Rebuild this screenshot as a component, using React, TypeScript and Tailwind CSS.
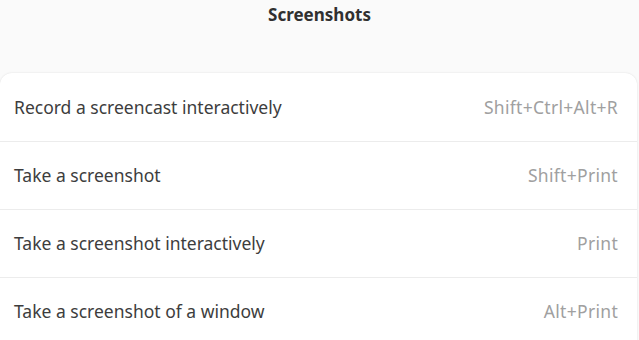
import React from 'react';

const shortcuts = [
  { label: 'Record a screencast interactively', keys: 'Shift+Ctrl+Alt+R' },
  { label: 'Take a screenshot', keys: 'Shift+Print' },
  { label: 'Take a screenshot interactively', keys: 'Print' },
  { label: 'Take a screenshot of a window', keys: 'Alt+Print' },
];

const App: React.FC = () => {
  return (
    <div
      className="h-[340px] w-[639px] overflow-hidden bg-[#fafafa]"
      style={{ fontFamily: '"Noto Sans", "Open Sans", sans-serif' }}
    >
      <h1 className="pt-[3px] text-center text-[17px] font-bold leading-6 text-[#303030]">Screenshots</h1>
      <div className="mt-[46px] mr-[2px] rounded-t-xl bg-white shadow-[0_0_2px_rgba(0,0,0,0.12)]">
        {shortcuts.map((s, i) => (
          <div
            key={s.label}
            className={`flex h-[68px] items-center justify-between pl-[14px] pr-[19px] ${i > 0 ? 'border-t border-[#ececec]' : ''}`}
          >
            <span className="text-[17.5px] text-[#3d3d3d]">{s.label}</span>
            <span className="text-[17.5px] tracking-[0.3px] text-[#a0a0a0]">{s.keys}</span>
          </div>
        ))}
      </div>
    </div>
  );
};

export default App;
